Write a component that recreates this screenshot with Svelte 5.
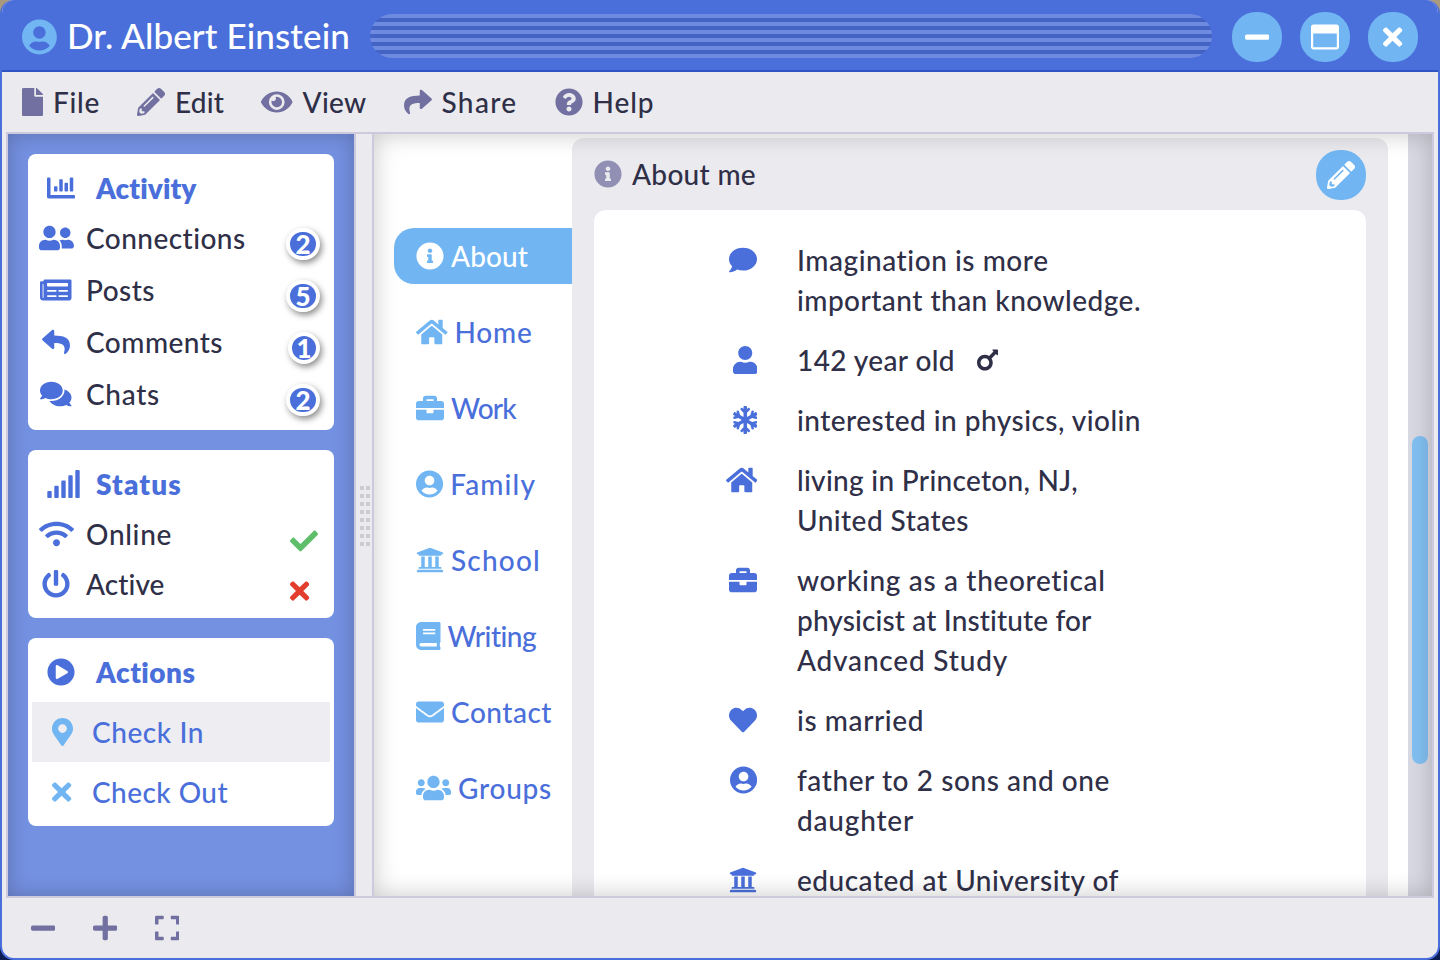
<script>
  const icons = {
    userCircle: [496, 'M248 8C111 8 0 119 0 256s111 248 248 248 248-111 248-248S385 8 248 8zm0 96c48.6 0 88 39.4 88 88s-39.4 88-88 88-88-39.4-88-88 39.4-88 88-88zm0 344c-58.7 0-111.3-26.6-146.5-68.2 18.8-35.4 55.6-59.8 98.5-59.8 2.4 0 4.8.4 7.1 1.1 13 4.2 26.6 6.9 40.9 6.9 14.3 0 28-2.7 40.9-6.9 2.3-.7 4.7-1.1 7.1-1.1 42.9 0 79.7 24.4 98.5 59.8C359.3 421.4 306.7 448 248 448z'],
    info: [512, 'M256 8C119.043 8 8 119.083 8 256c0 136.997 111.043 248 248 248s248-111.003 248-248C504 119.083 392.957 8 256 8zm0 110c23.196 0 42 18.804 42 42s-18.804 42-42 42-42-18.804-42-42 18.804-42 42-42zm56 254c0 6.627-5.373 12-12 12h-88c-6.627 0-12-5.373-12-12v-24c0-6.627 5.373-12 12-12h12v-64h-12c-6.627 0-12-5.373-12-12v-24c0-6.627 5.373-12 12-12h64c6.627 0 12 5.373 12 12v100h12c6.627 0 12 5.373 12 12v24z'],
    question: [512, 'M504 256c0 136.997-111.043 248-248 248S8 392.997 8 256C8 119.083 119.043 8 256 8s248 111.083 248 248zM262.655 90c-54.497 0-89.255 22.957-116.549 63.758-3.536 5.286-2.353 12.415 2.715 16.258l34.699 26.31c5.205 3.947 12.621 3.008 16.665-2.122 17.864-22.658 30.113-35.797 57.303-35.797 20.429 0 45.698 13.148 45.698 32.958 0 14.976-12.363 22.667-32.534 33.976C247.128 238.528 216 254.941 216 296v4c0 6.627 5.373 12 12 12h56c6.627 0 12-5.373 12-12v-1.333c0-28.462 83.186-29.647 83.186-106.667 0-58.002-60.165-102-116.531-102zM256 338c-25.365 0-46 20.635-46 46 0 25.364 20.635 46 46 46s46-20.636 46-46c0-25.365-20.635-46-46-46z'],
    share: [512, 'M503.691 189.836L327.687 37.851C312.281 24.546 288 35.347 288 56.015v80.053C127.371 137.907 0 170.1 0 322.326c0 61.441 39.581 122.309 83.333 154.132 13.653 9.931 33.111-2.533 28.077-18.631C66.066 312.814 132.917 274.316 288 272.085V360c0 20.7 24.3 31.453 39.687 18.164l176.004-152c11.071-9.562 11.086-26.753 0-36.328z'],
    reply: [512, 'M8.309 189.836L184.313 37.851C199.719 24.546 224 35.347 224 56.015v80.053c160.629 1.839 288 34.032 288 186.258 0 61.441-39.581 122.309-83.333 154.132-13.653 9.931-33.111-2.533-28.077-18.631 45.344-145.012-21.507-183.51-176.59-185.742V360c0 20.7-24.3 31.453-39.687 18.164l-176.004-152c-11.071-9.562-11.086-26.753 0-36.328z'],
    file: [384, 'M224 136V0H24C10.7 0 0 10.7 0 24v464c0 13.3 10.7 24 24 24h336c13.3 0 24-10.7 24-24V160H248c-13.2 0-24-10.8-24-24zm160-14.1v6.1H256V0h6.1c6.4 0 12.5 2.5 17 7l97.9 98c4.5 4.5 7 10.6 7 16.9z'],
    pencil: [512, 'M497.9 142.1l-46.1 46.1c-4.7 4.7-12.3 4.7-17 0l-111-111c-4.7-4.7-4.7-12.3 0-17l46.1-46.1c18.7-18.7 49.1-18.7 67.9 0l60.1 60.1c18.8 18.7 18.8 49.1 0 67.9zM284.2 99.8L21.6 362.4.4 483.9c-2.9 16.4 11.4 30.6 27.8 27.8l121.5-21.3 262.6-262.6c4.7-4.7 4.7-12.3 0-17l-111-111c-4.8-4.7-12.4-4.7-17.1 0zM124.1 339.9c-5.5-5.5-5.5-14.3 0-19.8l154-154c5.5-5.5 14.3-5.5 19.8 0s5.5 14.3 0 19.8l-154 154c-5.5 5.5-14.3 5.5-19.8 0zM88 424h48v36.3l-64.5 11.3-31.1-31.1L51.7 376H88v48z'],
    eye: [576, 'M572.52 241.4C518.29 135.59 410.93 64 288 64S57.68 135.64 3.48 241.41a32.35 32.35 0 0 0 0 29.19C57.71 376.41 165.07 448 288 448s230.32-71.64 284.52-177.41a32.35 32.35 0 0 0 0-29.19zM288 400a144 144 0 1 1 144-144 143.93 143.93 0 0 1-144 144zm0-240a95.31 95.31 0 0 0-25.31 3.79 47.85 47.85 0 0 1-66.9 66.9A95.78 95.78 0 1 0 288 160z'],
    chart: [512, 'M332.8 320h38.4c6.4 0 12.8-6.4 12.8-12.8V172.8c0-6.4-6.4-12.8-12.8-12.8h-38.4c-6.4 0-12.8 6.4-12.8 12.8v134.4c0 6.4 6.4 12.8 12.8 12.8zm96 0h38.4c6.4 0 12.8-6.4 12.8-12.8V76.8c0-6.4-6.4-12.8-12.8-12.8h-38.4c-6.4 0-12.8 6.4-12.8 12.8v230.4c0 6.4 6.4 12.8 12.8 12.8zm-288 0h38.4c6.4 0 12.8-6.4 12.8-12.8v-70.4c0-6.4-6.4-12.8-12.8-12.8h-38.4c-6.4 0-12.8 6.4-12.8 12.8v70.4c0 6.4 6.4 12.8 12.8 12.8zm96 0h38.4c6.4 0 12.8-6.4 12.8-12.8V108.8c0-6.4-6.4-12.8-12.8-12.8h-38.4c-6.4 0-12.8 6.4-12.8 12.8v198.4c0 6.4 6.4 12.8 12.8 12.8zM496 384H64V80c0-8.84-7.16-16-16-16H16C7.16 64 0 71.16 0 80v336c0 17.67 14.33 32 32 32h464c8.84 0 16-7.16 16-16v-32c0-8.84-7.16-16-16-16z'],
    friends: [640, 'M192 256c61.9 0 112-50.1 112-112S253.9 32 192 32 80 82.1 80 144s50.1 112 112 112zm76.8 32h-8.3c-20.8 10-43.9 16-68.5 16s-47.6-6-68.5-16h-8.3C51.6 288 0 339.6 0 403.2V432c0 26.5 21.5 48 48 48h288c26.5 0 48-21.5 48-48v-28.8c0-63.6-51.6-115.2-115.2-115.2zM480 256c53 0 96-43 96-96s-43-96-96-96-96 43-96 96 43 96 96 96zm48 32h-3.8c-13.9 4.8-28.6 8-44.2 8s-30.3-3.2-44.2-8H432c-20.4 0-39.2 5.9-55.7 15.4 24.4 26.3 39.7 61.2 39.7 99.8v38.4c0 2.2-.5 4.3-.6 6.4H592c26.5 0 48-21.5 48-48 0-61.9-50.1-112-112-112z'],
    news: [576, 'M552 64H88c-13.255 0-24 10.745-24 24v8H24c-13.255 0-24 10.745-24 24v272c0 30.928 25.072 56 56 56h472c26.51 0 48-21.49 48-48V88c0-13.255-10.745-24-24-24zM56 400a8 8 0 0 1-8-8V144h16v248a8 8 0 0 1-8 8zm236-16H140c-6.627 0-12-5.373-12-12v-8c0-6.627 5.373-12 12-12h152c6.627 0 12 5.373 12 12v8c0 6.627-5.373 12-12 12zm208 0H348c-6.627 0-12-5.373-12-12v-8c0-6.627 5.373-12 12-12h152c6.627 0 12 5.373 12 12v8c0 6.627-5.373 12-12 12zm-208-96H140c-6.627 0-12-5.373-12-12v-8c0-6.627 5.373-12 12-12h152c6.627 0 12 5.373 12 12v8c0 6.627-5.373 12-12 12zm208 0H348c-6.627 0-12-5.373-12-12v-8c0-6.627 5.373-12 12-12h152c6.627 0 12 5.373 12 12v8c0 6.627-5.373 12-12 12zm0-96H140c-6.627 0-12-5.373-12-12v-40c0-6.627 5.373-12 12-12h360c6.627 0 12 5.373 12 12v40c0 6.627-5.373 12-12 12z'],
    chats: [576, 'M416 192c0-88.4-93.1-160-208-160S0 103.6 0 192c0 34.3 14.1 65.9 38 92-13.4 30.2-35.5 54.2-35.8 54.5-2.2 2.3-2.8 5.7-1.5 8.7S4.8 352 8 352c36.6 0 66.9-12.3 88.7-25 32.2 15.7 70.3 25 111.3 25 114.9 0 208-71.6 208-160zm122 220c23.9-26 38-57.7 38-92 0-66.9-53.5-124.2-129.3-148.1.9 6.6 1.3 13.3 1.3 20.1 0 105.9-107.7 192-240 192-10.8 0-21.3-.8-31.7-1.9C207.8 439.6 281.8 480 368 480c41 0 79.1-9.2 111.3-25 21.8 12.7 52.1 25 88.7 25 3.2 0 6.1-1.9 7.3-4.8 1.3-2.9.7-6.3-1.5-8.7-.3-.3-22.4-24.2-35.8-54.5z'],
    signal: [640, 'M216 288h-48c-8.84 0-16 7.16-16 16v192c0 8.84 7.16 16 16 16h48c8.84 0 16-7.16 16-16V304c0-8.84-7.16-16-16-16zM88 384H40c-8.84 0-16 7.16-16 16v96c0 8.84 7.16 16 16 16h48c8.84 0 16-7.16 16-16v-96c0-8.84-7.16-16-16-16zm256-192h-48c-8.84 0-16 7.16-16 16v288c0 8.84 7.16 16 16 16h48c8.84 0 16-7.16 16-16V208c0-8.84-7.16-16-16-16zm128-96h-48c-8.84 0-16 7.16-16 16v384c0 8.84 7.16 16 16 16h48c8.84 0 16-7.16 16-16V112c0-8.84-7.16-16-16-16zM600 0h-48c-8.84 0-16 7.16-16 16v480c0 8.84 7.16 16 16 16h48c8.84 0 16-7.16 16-16V16c0-8.84-7.16-16-16-16z'],
    wifi: [640, 'M634.91 154.88C457.74-8.99 182.19-8.93 5.09 154.88c-6.66 6.16-6.79 16.59-.35 22.98l34.24 33.97c6.14 6.1 16.02 6.23 22.4.38 145.92-133.68 371.3-133.71 517.25 0 6.38 5.85 16.26 5.71 22.4-.38l34.24-33.97c6.43-6.39 6.3-16.82-.36-22.98zM320 352c-35.35 0-64 28.65-64 64s28.65 64 64 64 64-28.65 64-64-28.65-64-64-64zm202.67-83.59c-115.26-101.93-290.21-101.82-405.34 0-6.9 6.1-7.12 16.69-.57 23.15l34.44 33.99c6 5.92 15.66 6.32 22.05.8 83.95-72.57 209.74-72.41 293.49 0 6.39 5.52 16.05 5.13 22.05-.8l34.44-33.99c6.56-6.46 6.33-17.06-.56-23.15z'],
    power: [512, 'M400 54.1c63 45 104 118.6 104 201.9 0 136.8-110.8 247.7-247.5 248C120 504.3 8.2 393 8 256.4 7.9 173.1 48.9 99.3 111.8 54.2c11.7-8.3 28-4.8 35 7.7L162.6 90c5.9 10.5 3.1 23.8-6.6 31-41.5 30.8-68 79.6-68 134.9-.1 92.3 74.5 168.1 168 168.1 91.6 0 168.6-74.2 168-169.1-.3-51.8-24.7-101.8-68.1-134-9.7-7.2-12.4-20.5-6.5-30.9l15.8-28.1c7-12.4 23.2-16.1 34.8-7.8zM296 264V24c0-13.3-10.7-24-24-24h-32c-13.3 0-24 10.7-24 24v240c0 13.3 10.7 24 24 24h32c13.3 0 24-10.7 24-24z'],
    check: [512, 'M173.898 439.404l-166.4-166.4c-9.997-9.997-9.997-26.206 0-36.204l36.203-36.204c9.997-9.998 26.207-9.998 36.204 0L192 312.69 432.095 72.596c9.997-9.997 26.207-9.997 36.204 0l36.203 36.204c9.997 9.997 9.997 26.206 0 36.204l-294.4 294.401c-9.998 9.997-26.207 9.997-36.204-.001z'],
    times: [352, 'M242.72 256l100.07-100.07c12.28-12.28 12.28-32.19 0-44.48l-22.24-22.24c-12.28-12.28-32.19-12.28-44.48 0L176 189.28 75.93 89.21c-12.28-12.28-32.19-12.28-44.48 0L9.21 111.45c-12.28 12.28-12.28 32.19 0 44.48L109.28 256 9.21 356.07c-12.28 12.28-12.28 32.19 0 44.48l22.24 22.24c12.28 12.28 32.2 12.28 44.48 0L176 322.72l100.07 100.07c12.28 12.28 32.2 12.28 44.48 0l22.24-22.24c12.28-12.28 12.28-32.19 0-44.48L242.72 256z'],
    play: [512, 'M256 8C119 8 8 119 8 256s111 248 248 248 248-111 248-248S393 8 256 8zm115.7 272l-176 101c-15.8 8.8-35.7-2.5-35.7-21V152c0-18.4 19.8-29.8 35.7-21l176 107c16.4 9.2 16.4 32.9 0 42z'],
    marker: [384, 'M172.268 501.67C26.97 291.031 0 269.413 0 192 0 85.961 85.961 0 192 0s192 85.961 192 192c0 77.413-26.97 99.031-172.268 309.67-9.535 13.774-29.93 13.773-39.464 0zM192 272c44.183 0 80-35.817 80-80s-35.817-80-80-80-80 35.817-80 80 35.817 80 80 80z'],
    home: [576, 'M280.37 148.26L96 300.11V464a16 16 0 0 0 16 16l112.06-.29a16 16 0 0 0 15.92-16V368a16 16 0 0 1 16-16h64a16 16 0 0 1 16 16v95.64a16 16 0 0 0 16 16.05L464 480a16 16 0 0 0 16-16V300L295.67 148.26a12.19 12.19 0 0 0-15.3 0zM571.6 251.47L488 182.56V44.05a12 12 0 0 0-12-12h-56a12 12 0 0 0-12 12v72.61L318.47 43a48 48 0 0 0-61 0L4.34 251.47a12 12 0 0 0-1.6 16.9l25.5 31A12 12 0 0 0 45.15 301l235.22-193.74a12.19 12.19 0 0 1 15.3 0L530.9 301a12 12 0 0 0 16.9-1.6l25.5-31a12 12 0 0 0-1.7-16.93z'],
    briefcase: [512, 'M320 336c0 8.84-7.16 16-16 16h-96c-8.84 0-16-7.16-16-16v-48H0v144c0 25.6 22.4 48 48 48h416c25.6 0 48-22.4 48-48V288H320v48zm144-208h-80V80c0-25.6-22.4-48-48-48H176c-25.6 0-48 22.4-48 48v48H48c-25.6 0-48 22.4-48 48v80h512v-80c0-25.6-22.4-48-48-48zm-144 0H192V96h128v32z'],
    school: [512, 'M496 128v16a8 8 0 0 1-8 8h-24v12c0 6.627-5.373 12-12 12H60c-6.627 0-12-5.373-12-12v-12H24a8 8 0 0 1-8-8v-16a8 8 0 0 1 4.941-7.392l232-88a7.996 7.996 0 0 1 6.118 0l232 88A8 8 0 0 1 496 128zm-24 304H40c-13.255 0-24 10.745-24 24v16a8 8 0 0 0 8 8h464a8 8 0 0 0 8-8v-16c0-13.255-10.745-24-24-24zM96 192v192H60c-6.627 0-12 5.373-12 12v20h416v-20c0-6.627-5.373-12-12-12h-36V192h-64v192h-64V192h-64v192h-64V192H96z'],
    book: [448, 'M448 360V24c0-13.3-10.7-24-24-24H96C43 0 0 43 0 96v320c0 53 43 96 96 96h328c13.3 0 24-10.7 24-24v-16c0-7.5-3.5-14.3-8.9-18.7-4.2-15.4-4.2-59.3 0-74.7 5.4-4.3 8.9-11.1 8.9-18.6zM128 134c0-3.3 2.7-6 6-6h212c3.3 0 6 2.7 6 6v20c0 3.3-2.7 6-6 6H134c-3.3 0-6-2.7-6-6v-20zm0 64c0-3.3 2.7-6 6-6h212c3.3 0 6 2.7 6 6v20c0 3.3-2.7 6-6 6H134c-3.3 0-6-2.7-6-6v-20zm253.4 250H96c-17.7 0-32-14.3-32-32 0-17.6 14.4-32 32-32h285.4c-1.9 17.1-1.9 46.9 0 64z'],
    envelope: [512, 'M502.3 190.8c3.9-3.1 9.7-.2 9.7 4.7V400c0 26.5-21.5 48-48 48H48c-26.5 0-48-21.5-48-48V195.6c0-5 5.7-7.8 9.7-4.7 22.4 17.4 52.1 39.5 154.1 113.6 21.1 15.4 56.7 47.8 92.2 47.6 35.7.3 72-32.8 92.3-47.6 102-74.1 131.6-96.3 154-113.7zM256 320c23.2.4 56.6-29.2 73.4-41.4 132.7-96.3 142.8-104.7 173.4-128.7 5.8-4.5 9.2-11.5 9.2-18.9v-19c0-26.5-21.5-48-48-48H48c-26.5 0-48 21.5-48 48v19c0 7.4 3.4 14.3 9.2 18.9 30.6 23.9 40.7 32.4 173.4 128.7 16.8 12.2 50.2 41.8 73.4 41.4z'],
    users: [640, 'M96 224c35.3 0 64-28.7 64-64s-28.7-64-64-64-64 28.7-64 64 28.7 64 64 64zm448 0c35.3 0 64-28.7 64-64s-28.7-64-64-64-64 28.7-64 64 28.7 64 64 64zm32 32h-64c-17.6 0-33.5 7.1-45.1 18.6 40.3 22.1 68.9 62 75.1 109.4h66c17.7 0 32-14.3 32-32v-32c0-35.3-28.7-64-64-64zm-256 0c61.9 0 112-50.1 112-112S381.9 32 320 32 208 82.1 208 144s50.1 112 112 112zm76.8 32h-8.3c-20.8 10-43.9 16-68.5 16s-47.6-6-68.5-16h-8.3C179.6 288 128 339.6 128 403.2V432c0 26.5 21.5 48 48 48h288c26.5 0 48-21.5 48-48v-28.8c0-63.6-51.6-115.2-115.2-115.2zm-223.7-13.4C161.5 263.1 145.6 256 128 256H64c-35.3 0-64 28.7-64 64v32c0 17.7 14.3 32 32 32h65.9c6.3-47.4 34.9-87.3 75.2-109.4z'],
    comment: [512, 'M256 32C114.6 32 0 125.1 0 240c0 49.6 21.4 95 57 130.7C44.5 421.1 2.7 466 2.2 466.5c-2.2 2.3-2.8 5.7-1.5 8.7S4.8 480 8 480c66.3 0 116-31.8 140.6-51.4 32.7 12.3 69 19.4 107.4 19.4 141.4 0 256-93.1 256-208S397.4 32 256 32z'],
    user: [448, 'M224 256c70.7 0 128-57.3 128-128S294.7 0 224 0 96 57.3 96 128s57.3 128 128 128zm89.6 32h-16.7c-22.2 10.2-46.9 16-72.9 16s-50.6-5.8-72.9-16h-16.7C60.2 288 0 348.2 0 422.4V464c0 26.5 21.5 48 48 48h352c26.5 0 48-21.5 48-48v-41.6c0-74.2-60.2-134.4-134.4-134.4z'],
    snow: [448, 'M440.3 345.2l-33.8-19.5 26-7c8.2-2.2 13.1-10.7 10.9-18.9l-4-14.9c-2.2-8.2-10.7-13.1-18.9-10.9l-70.8 19-63.9-37 63.8-36.9 70.8 19c8.2 2.2 16.7-2.7 18.9-10.9l4-14.9c2.2-8.2-2.7-16.7-10.9-18.9l-26-7 33.8-19.5c7.4-4.3 9.9-13.7 5.7-21.1L430.4 119c-4.2-7.4-13.7-9.9-21.1-5.7l-33.8 19.5 7-26c2.2-8.2-2.7-16.7-10.9-18.9l-14.9-4c-8.2-2.2-16.7 2.7-18.9 10.9l-19 70.8-62.8 36.2v-77.5l53.7-53.7c6.2-6.2 6.2-16.4 0-22.6l-11.3-11.3c-6.2-6.2-16.4-6.2-22.6 0L256 56.4V16c0-8.8-7.2-16-16-16h-32c-8.8 0-16 7.2-16 16v40.4l-19.7-19.7c-6.2-6.2-16.4-6.2-22.6 0L138.3 48c-6.3 6.2-6.3 16.4 0 22.6l53.7 53.7v77.5l-62.8-36.2-19-70.8c-2.2-8.2-10.7-13.1-18.9-10.9l-14.9 4c-8.2 2.2-13.1 10.7-10.9 18.9l7 26-33.8-19.5c-7.4-4.3-16.8-1.7-21.1 5.7L2.1 145.7c-4.2 7.4-1.7 16.8 5.7 21.1l33.8 19.5-26 7c-8.3 2.2-13.2 10.7-11 19l4 14.9c2.2 8.2 10.7 13.1 18.9 10.9l70.8-19 63.8 36.9-63.8 36.9-70.8-19c-8.2-2.2-16.7 2.7-18.9 10.9l-4 14.9c-2.2 8.2 2.7 16.7 10.9 18.9l26 7-33.8 19.6c-7.4 4.3-9.9 13.7-5.7 21.1l15.5 26.8c4.2 7.4 13.7 9.9 21.1 5.7l33.8-19.5-7 26c-2.2 8.2 2.7 16.7 10.9 18.9l14.9 4c8.2 2.2 16.7-2.7 18.9-10.9l19-70.8 62.8-36.2v77.5l-53.7 53.7c-6.3 6.2-6.3 16.4 0 22.6l11.3 11.3c6.2 6.2 16.4 6.2 22.6 0l19.7-19.7V496c0 8.8 7.2 16 16 16h32c8.8 0 16-7.2 16-16v-40.4l19.7 19.7c6.2 6.2 16.4 6.2 22.6 0l11.3-11.3c6.2-6.2 6.2-16.4 0-22.6L256 387.7v-77.5l62.8 36.2 19 70.8c2.2 8.2 10.7 13.1 18.9 10.9l14.9-4c8.2-2.2 13.1-10.7 10.9-18.9l-7-26 33.8 19.5c7.4 4.3 16.9 1.7 21.1-5.7l15.5-26.8c4.3-7.4 1.8-16.8-5.6-21z'],
    heart: [512, 'M462.3 62.6C407.5 15.9 326 24.3 275.7 76.2L256 96.5l-19.7-20.3C186.1 24.3 104.5 15.9 49.7 62.6c-62.8 53.6-66.1 149.8-9.9 207.9l193.5 199.8c12.5 12.9 32.8 12.9 45.3 0l193.5-199.8c56.3-58.1 53-154.3-9.8-207.9z'],
    mars: [384, 'M372 64h-79c-10.7 0-16 12.9-8.5 20.5l16.9 16.9-80.7 80.7C198.5 167.5 172.2 160 144 160 64.5 160 0 224.5 0 304s64.5 144 144 144 144-64.5 144-144c0-28.2-8.1-54.5-22.1-76.7l80.7-80.7 16.9 16.9c7.6 7.6 20.5 2.2 20.5-8.5V76c0-6.6-5.4-12-12-12zM144 384c-44.1 0-80-35.9-80-80s35.9-80 80-80 80 35.9 80 80-35.9 80-80 80z'],
    minus: [448, 'M416 208H32c-17.67 0-32 14.33-32 32v32c0 17.67 14.33 32 32 32h384c17.67 0 32-14.33 32-32v-32c0-17.67-14.33-32-32-32z'],
    plus: [448, 'M416 208H272V64c0-17.67-14.33-32-32-32h-32c-17.67 0-32 14.33-32 32v144H32c-17.67 0-32 14.33-32 32v32c0 17.67 14.33 32 32 32h144v144c0 17.67 14.33 32 32 32h32c17.67 0 32-14.33 32-32V304h144c17.67 0 32-14.33 32-32v-32c0-17.67-14.33-32-32-32z'],
    expand: [448, 'M0 180V56c0-13.3 10.7-24 24-24h124c6.6 0 12 5.4 12 12v40c0 6.6-5.4 12-12 12H64v84c0 6.6-5.4 12-12 12H12c-6.6 0-12-5.4-12-12zM288 44v40c0 6.6 5.4 12 12 12h84v84c0 6.6 5.4 12 12 12h40c6.6 0 12-5.4 12-12V56c0-13.3-10.7-24-24-24H300c-6.6 0-12 5.4-12 12zm148 276h-40c-6.6 0-12 5.4-12 12v84h-84c-6.6 0-12 5.4-12 12v40c0 6.6 5.4 12 12 12h124c13.3 0 24-10.7 24-24V332c0-6.6-5.4-12-12-12zM160 468v-40c0-6.6-5.4-12-12-12H64v-84c0-6.6-5.4-12-12-12H12c-6.6 0-12 5.4-12 12v124c0 13.3 10.7 24 24 24h124c6.6 0 12-5.4 12-12z'],
    window: [512, 'M44 28h424c24 0 44 20 44 44v368c0 24-20 44-44 44H44c-24 0-44-20-44-44V72c0-24 20-44 44-44zM40 190v244c0 6 4 10 10 10h412c6 0 10-4 10-10V190z']
  };

  const menu = [
    { icon: 'file', label: 'File', w: 47 },
    { icon: 'pencil', label: 'Edit', w: 49 },
    { icon: 'eye', label: 'View', w: 64 },
    { icon: 'share', label: 'Share', w: 76 },
    { icon: 'question', label: 'Help', w: 62 }
  ];
  const activity = [
    { icon: 'friends', label: 'Connections', w: 160, count: 2 },
    { icon: 'news', label: 'Posts', w: 69, count: 5 },
    { icon: 'reply', label: 'Comments', w: 137, count: 1 },
    { icon: 'chats', label: 'Chats', w: 74, count: 2 }
  ];
  const status = [
    { icon: 'wifi', label: 'Online', w: 86, state: 'check' },
    { icon: 'power', label: 'Active', w: 79, state: 'times' }
  ];
  const actions = [
    { icon: 'marker', label: 'Check In', w: 112, hover: true },
    { icon: 'times', label: 'Check Out', w: 136 }
  ];
  const tabs = [
    { icon: 'info', label: 'About', w: 77, active: true },
    { icon: 'home', label: 'Home', w: 78 },
    { icon: 'briefcase', label: 'Work', w: 65 },
    { icon: 'userCircle', label: 'Family', w: 86 },
    { icon: 'school', label: 'School', w: 90 },
    { icon: 'book', label: 'Writing', w: 89 },
    { icon: 'envelope', label: 'Contact', w: 101 },
    { icon: 'users', label: 'Groups', w: 94 }
  ];
  const facts = [
    { icon: 'comment', lines: [['Imagination is more', 252], ['important than knowledge.', 344]] },
    { icon: 'user', lines: [['142 year old', 158]], mars: true },
    { icon: 'snow', lines: [['interested in physics, violin', 344]] },
    { icon: 'home', lines: [['living in Princeton, NJ,', 281], ['United States', 172]] },
    { icon: 'briefcase', lines: [['working as a theoretical', 309], ['physicist at Institute for', 295], ['Advanced Study', 211]] },
    { icon: 'heart', lines: [['is married', 127]] },
    { icon: 'userCircle', lines: [['father to 2 sons and one', 313], ['daughter', 117]] },
    { icon: 'school', lines: [['educated at University of', 322]] }
  ];

  // Tracks the letters so that a label spans the given width.
  function fit(node, width) {
    const natural = node.getBoundingClientRect().width;
    node.style.letterSpacing = `${(width - natural) / node.textContent.length}px`;
  }
</script>

{#snippet glyph(name, size = 28)}
  <svg viewBox="0 0 {icons[name][0]} 512" width={(icons[name][0] * size) / 512} height={size} fill="currentColor" aria-hidden="true">
    <path fill-rule={name === 'window' ? 'evenodd' : 'nonzero'} d={icons[name][1]} />
  </svg>
{/snippet}

<div class="window">
  <header>
    <span class="avatar">{@render glyph('userCircle', 36)}</span>
    <h1><span class="t" use:fit={283}>Dr. Albert Einstein</span></h1>
    <div class="grip"></div>
    <div class="controls">
      <button aria-label="Minimize">{@render glyph('minus')}</button>
      <button aria-label="Maximize">{@render glyph('window')}</button>
      <button aria-label="Close">{@render glyph('times')}</button>
    </div>
  </header>

  <nav class="menu">
    {#each menu as m}
      <div class="menu-item">{@render glyph(m.icon)}<span class="t" use:fit={m.w}>{m.label}</span></div>
    {/each}
  </nav>

  <main>
    <aside>
      <section class="card">
        <h2><span class="head-icon">{@render glyph('chart')}</span><span class="t" use:fit={101}>Activity</span></h2>
        {#each activity as a}
          <div class="row tall">
            <span class="row-icon">{@render glyph(a.icon)}</span>
            <span class="t" use:fit={a.w}>{a.label}</span>
            <span class="badge" class:narrow={a.count === 1}>{a.count}</span>
          </div>
        {/each}
      </section>
      <section class="card status">
        <h2><span class="head-icon">{@render glyph('signal')}</span><span class="t" use:fit={86}>Status</span></h2>
        {#each status as s}
          <div class="row">
            <span class="row-icon">{@render glyph(s.icon)}</span>
            <span class="t" use:fit={s.w}>{s.label}</span>
            <span class="state {s.state}">{@render glyph(s.state)}</span>
          </div>
        {/each}
      </section>
      <section class="card">
        <h2><span class="head-icon">{@render glyph('play')}</span><span class="t" use:fit={100}>Actions</span></h2>
        {#each actions as a}
          <div class="action" class:hover={a.hover}>
            <span class="action-icon">{@render glyph(a.icon)}</span>
            <span class="t" use:fit={a.w}>{a.label}</span>
          </div>
        {/each}
      </section>
    </aside>

    <div class="gutter"><div class="dots"></div></div>

    <div class="content">
      <div class="tabs">
        {#each tabs as tab}
          <div class="tab" class:active={tab.active}>{@render glyph(tab.icon)}<span class="t" use:fit={tab.w}>{tab.label}</span></div>
        {/each}
      </div>
      <section class="panel">
        <div class="panel-head">
          <span class="panel-icon">{@render glyph('info')}</span>
          <span class="t" use:fit={124}>About me</span>
          <button class="edit" aria-label="Edit">{@render glyph('pencil')}</button>
        </div>
        <div class="facts">
          {#each facts as f}
            <div class="fact">
              <span class="fact-icon">{@render glyph(f.icon)}</span>
              <div class="fact-text">
                {#each f.lines as [line, w]}
                  <div class="line">
                    <span class="t" use:fit={w}>{line}</span>
                    {#if f.mars}<span class="mars">{@render glyph('mars')}</span>{/if}
                  </div>
                {/each}
              </div>
            </div>
          {/each}
        </div>
      </section>
      <div class="scrollbar"><div class="thumb"></div></div>
    </div>
  </main>

  <footer>
    {@render glyph('minus')}
    {@render glyph('plus')}
    {@render glyph('expand')}
  </footer>
</div>

<style>
  :global(body) {
    margin: 0;
    overflow: hidden;
    background: linear-gradient(#a8997f 0 50%, #0d1c50 50%);
  }
  .window, .window * { box-sizing: border-box; }
  .window {
    display: flex;
    flex-direction: column;
    width: 1440px;
    height: 960px;
    overflow: hidden;
    border: 2px solid #4a6fda;
    border-top: 0;
    border-radius: 14px;
    background: #ebeaef;
    color: #2f2f48;
    font: 500 28px/40px Lato, sans-serif;
  }
  svg { display: block; flex: none; }
  .t { white-space: pre; flex: none; }
  button {
    display: flex;
    align-items: center;
    justify-content: center;
    width: 50px;
    height: 50px;
    padding: 0;
    border: 0;
    border-radius: 24px;
    background: #71b6f2;
    color: #fff;
  }
  header {
    display: flex;
    align-items: center;
    flex: none;
    height: 72px;
    margin: 0 -2px;
    padding: 0 22px;
    background: #4a6fda;
    border-bottom: 2px solid #3052c2;
  }
  .avatar { width: 45px; padding-top: 3px; color: #71b6f2; }
  h1 { width: 303px; margin: 0; color: #fff; font-size: 35px; font-weight: 500; }
  .grip {
    width: 842px;
    height: 44px;
    margin-top: 2px;
    border-radius: 22px;
    background: repeating-linear-gradient(#6e8be1 0 4px, #4364c4 4px 8px);
  }
  .controls { display: flex; gap: 18px; margin: 4px 0 0 20px; }
  .menu { display: flex; flex: none; height: 60px; padding: 0 20px; gap: 37px; }
  .menu-item { display: flex; align-items: center; gap: 10px; }
  .menu-item svg { color: #7170a0; }
  main {
    display: flex;
    flex: none;
    height: 766px;
    margin: 0 4px;
    border: 2px solid #cccadc;
  }
  aside {
    width: 346px;
    padding: 20px;
    background: #7490e0;
    box-shadow: inset 0 0 20px rgba(0, 0, 0, .22);
  }
  .card { margin-bottom: 20px; padding: 4px; border-radius: 8px; background: #fff; }
  .card:first-child { height: 276px; }
  .status { height: 168px; }
  .card:last-child { height: 188px; }
  h2 { display: flex; align-items: center; height: 60px; margin: 0; color: #4a6fda; font-size: 28px; font-weight: 800; }
  .head-icon { width: 64px; padding-left: 15px; padding-bottom: 1px; }
  .status .head-icon { padding-left: 14px; }
  .row { display: flex; align-items: center; height: 50px; padding: 0 10px 10px 6px; }
  .row.tall { height: 52px; padding-bottom: 12px; }
  .row-icon { display: flex; justify-content: center; width: 36px; margin-right: 12px; color: #4a6fda; }
  .badge {
    display: flex;
    align-items: center;
    justify-content: center;
    width: 34px;
    height: 32px;
    margin: 12px 0 0 auto;
    border: 4px solid #fff;
    border-radius: 16px;
    background: #4a6fda;
    box-shadow: 2px 3px 6px rgba(0, 0, 0, .45);
    color: #fff;
    font-size: 26px;
    font-weight: 900;
    line-height: 24px;
  }
  .badge.narrow { width: 32px; }
  .state { width: 30px; margin: 14px 0 0 auto; }
  .state.check { color: #5fbe69; }
  .state.times { color: #e33d2e; }
  .action { display: flex; align-items: center; height: 60px; color: #4a6fda; }
  .action.hover { background: #eeedf2; }
  .action-icon { display: flex; justify-content: center; width: 60px; padding-bottom: 1px; color: #71b6f2; }
  .gutter {
    display: flex;
    align-items: center;
    justify-content: center;
    width: 20px;
    border: solid #cccadc;
    border-width: 0 2px;
  }
  .dots {
    width: 10px;
    height: 60px;
    margin-top: 2px;
    margin-left: 2px;
    background:
      linear-gradient(90deg, transparent 4px, #ebeaef 4px 6px, transparent 6px),
      repeating-linear-gradient(#cccccf 0 4px, transparent 4px 8px);
  }
  .content { position: relative; display: flex; width: 1058px; overflow: hidden; background: #fff; }
  .content::after {
    content: '';
    position: absolute;
    inset: 0;
    box-shadow: inset 0 0 24px rgba(0, 0, 0, .22);
    pointer-events: none;
  }
  .tabs { display: flex; flex-direction: column; gap: 20px; width: 198px; padding: 94px 0 0 20px; }
  .tab { display: flex; align-items: center; gap: 7px; flex: none; height: 56px; padding-left: 22px; color: #4a6fda; }
  .tab svg { color: #71b6f2; }
  .tab.active { border-radius: 20px 0 0 20px; background: #71b6f2; color: #fff; }
  .tab.active svg { color: #fff; }
  .panel { width: 816px; margin: 4px 20px 0 0; padding: 0 22px; border-radius: 12px 12px 0 0; background: #ebeaef; }
  .panel-head { display: flex; align-items: center; height: 72px; padding-top: 2px; }
  .panel-head .t { margin-bottom: 2px; }
  .panel-icon { margin-right: 10px; padding-bottom: 3px; color: #9190b4; }
  .edit { margin-left: auto; }
  .facts { display: flex; flex-direction: column; gap: 20px; padding-top: 30px; border-radius: 12px 12px 0 0; background: #fff; }
  .fact { display: flex; flex: none; }
  .fact-icon { display: flex; justify-content: flex-end; width: 163px; margin-right: 40px; padding-top: 5.5px; color: #4a6fda; }
  .line { display: flex; align-items: center; height: 40px; }
  .mars { margin-left: 22px; padding-bottom: 1px; }
  .scrollbar { flex: none; width: 24px; padding: 302px 4px 0; background: #d9d9e4; }
  .thumb { height: 328px; border-radius: 8px; background: #82c0f2; }
  footer { display: flex; align-items: center; gap: 37.5px; height: 60px; padding: 0 28.5px 1px; color: #7170a0; }
</style>
